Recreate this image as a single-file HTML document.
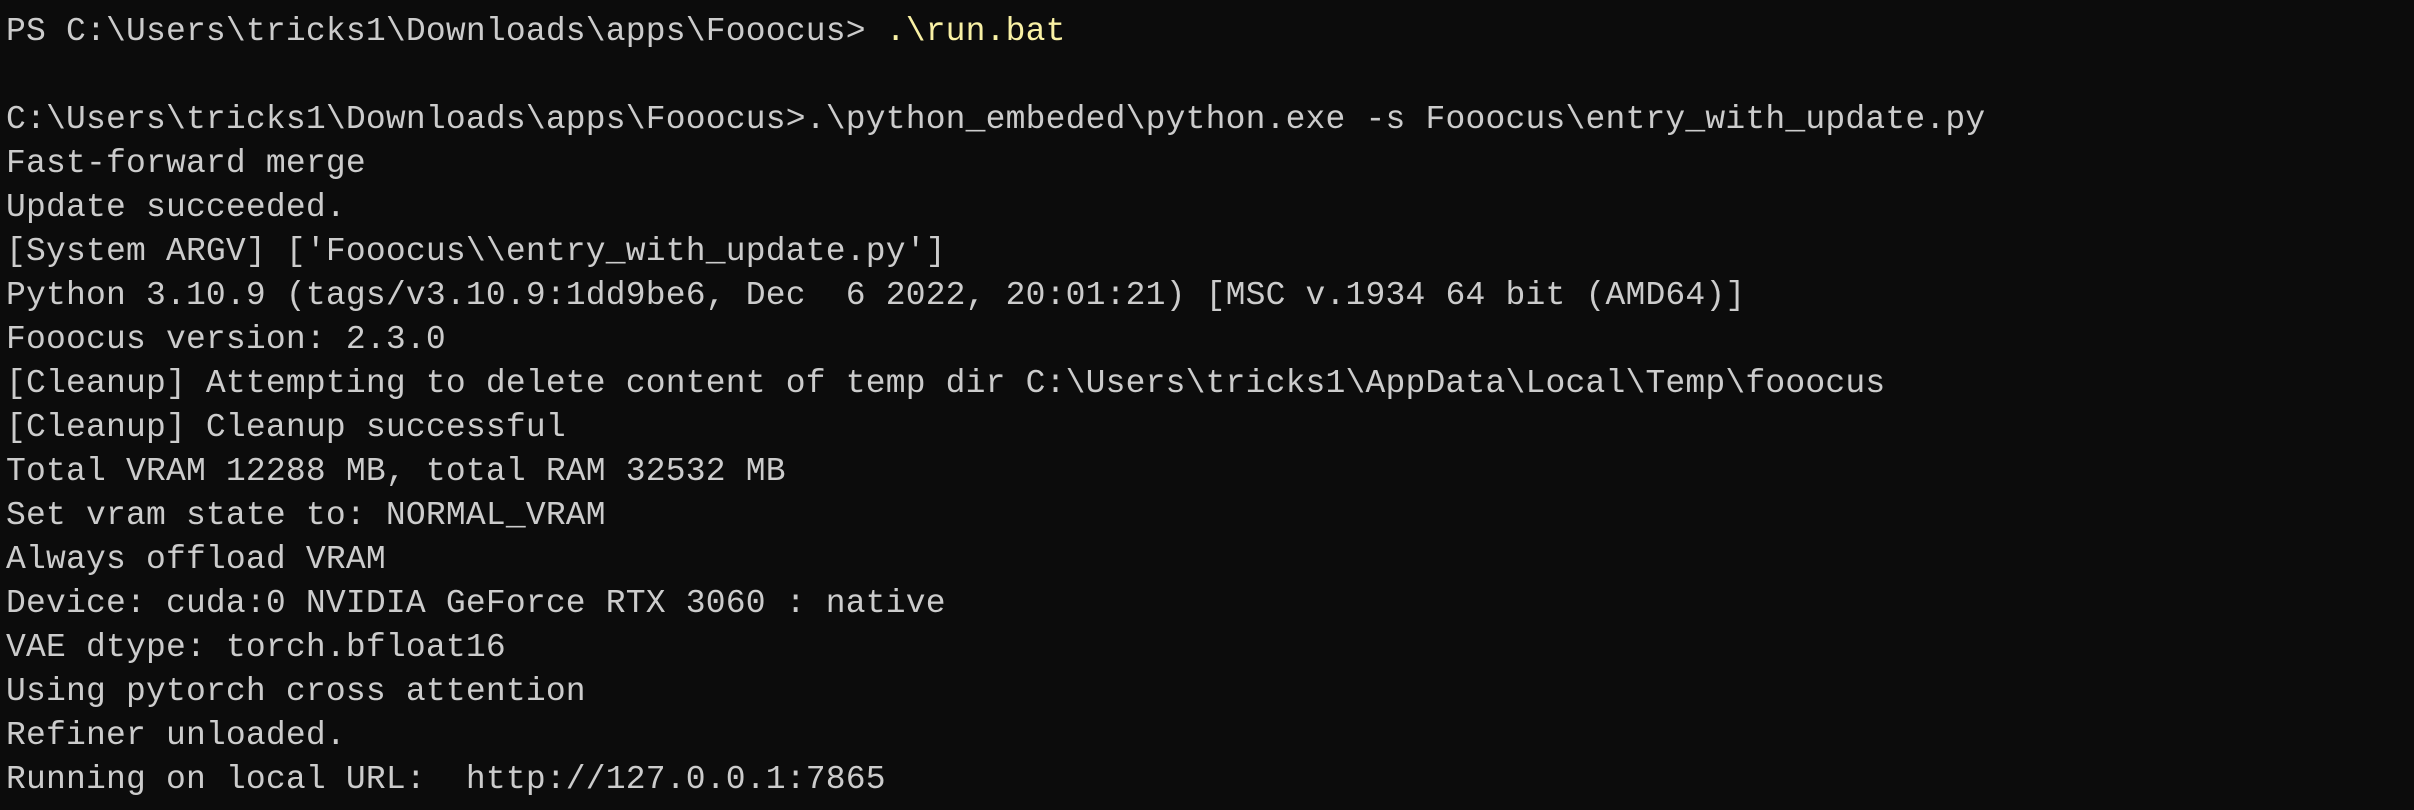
<!DOCTYPE html>
<html><head><meta charset="utf-8"><style>
html,body{margin:0;padding:0;background:#0c0c0c;width:2414px;height:810px;overflow:hidden}
pre{margin:0;padding:10px 0 0 6px;font-family:"Liberation Mono",monospace;font-size:33px;line-height:44px;letter-spacing:0.19px;color:#cccccc;white-space:pre}
.y{color:#f9f1a5}
</style></head><body><pre>PS C:\Users\tricks1\Downloads\apps\Fooocus> <span class="y">.\run.bat</span>

C:\Users\tricks1\Downloads\apps\Fooocus>.\python_embeded\python.exe -s Fooocus\entry_with_update.py
Fast-forward merge
Update succeeded.
[System ARGV] ['Fooocus\\entry_with_update.py']
Python 3.10.9 (tags/v3.10.9:1dd9be6, Dec  6 2022, 20:01:21) [MSC v.1934 64 bit (AMD64)]
Fooocus version: 2.3.0
[Cleanup] Attempting to delete content of temp dir C:\Users\tricks1\AppData\Local\Temp\fooocus
[Cleanup] Cleanup successful
Total VRAM 12288 MB, total RAM 32532 MB
Set vram state to: NORMAL_VRAM
Always offload VRAM
Device: cuda:0 NVIDIA GeForce RTX 3060 : native
VAE dtype: torch.bfloat16
Using pytorch cross attention
Refiner unloaded.
Running on local URL:  http://127.0.0.1:7865</pre></body></html>
